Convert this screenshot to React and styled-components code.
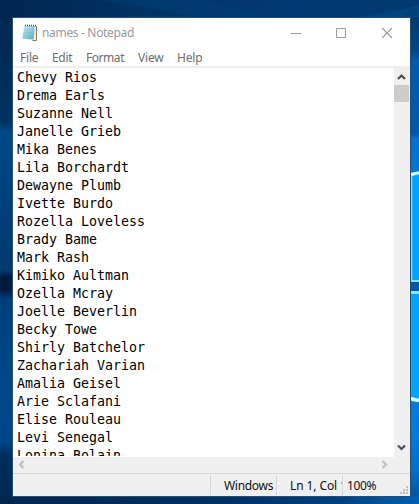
import React from "react";
import styled, { createGlobalStyle } from "styled-components";

const GlobalStyle = createGlobalStyle`
  * { box-sizing: border-box; }
  body { margin: 0; overflow: hidden; font-family: "Noto Sans", sans-serif; }
`;

const Desktop = styled.main`
  width: 419px;
  height: 504px;
  padding: 17px 8px 7px 12px;
  position: relative;
  overflow: hidden;
`;

const Wallpaper = styled.svg`
  position: absolute;
  inset: 0;
  display: block;
`;

const Window = styled.section`
  position: relative;
  width: 399px;
  height: 480px;
  border: 1px solid #234f78;
  background: #fff;
  display: flex;
  flex-direction: column;
`;

const TitleBar = styled.header`
  height: 29px;
  flex: none;
  display: flex;
  align-items: center;
  padding: 0 17px 0 8px;
`;

const Title = styled.h1`
  flex: 1;
  margin: 1px 0 0 3px;
  font-size: 12px;
  line-height: 16px;
  font-weight: 400;
  color: #999;
  letter-spacing: -0.33px;
`;

const WindowButtons = styled.div`
  display: grid;
  grid-template-columns: 45px 46px 12px;
`;

const Glyph = styled.svg`
  display: block;
  flex: none;
`;

const MenuBar = styled.nav`
  height: 21px;
  flex: none;
  display: flex;
  padding: 2px 0 0 7px;
  border-bottom: 2px solid #f0f0f0;
`;

const MenuItem = styled.span`
  width: ${(p) => p.$width}px;
  flex: none;
  font-size: 12px;
  line-height: 17px;
  letter-spacing: ${(p) => p.$tracking}px;
  color: #6d6d6d;
`;

const Editor = styled.div`
  height: 389px;
  flex: none;
  display: flex;
`;

const TextArea = styled.div`
  width: 381px;
  height: 388px;
  padding: 1px 0 0 4px;
  overflow: hidden;
  font-family: "DejaVu Sans Mono", monospace;
  font-size: 13.29px;
  color: #000;
`;

const Line = styled.div`
  height: 18px;
  line-height: 18px;
  white-space: pre;
`;

const VerticalScroll = styled.div`
  width: 16px;
  background: #f0f0f0;
  display: flex;
  flex-direction: column;
  align-items: flex-start;
  padding: 5px 0 6px 3px;
`;

const Thumb = styled.div`
  width: 15px;
  height: 17px;
  margin: 5px auto auto -3px;
  background: #cdcdcd;
`;

const HorizontalScroll = styled.div`
  height: 16px;
  flex: none;
  background: #f0f0f0;
  display: flex;
  align-items: flex-start;
  justify-content: space-between;
  padding: 3px 22px 0 5px;
`;

const StatusBar = styled.footer`
  flex: 1;
  background: #f0f0f0;
  border-top: 1px solid #d7d7d7;
  display: flex;
  padding: 1px 0 0 197px;
`;

const StatusCell = styled.div`
  width: ${(p) => p.$width}px;
  height: 20px;
  flex: none;
  overflow: hidden;
  border-left: 1px solid #d7d7d7;
  padding-left: ${(p) => p.$inset}px;
  font-size: 12px;
  line-height: 21px;
  letter-spacing: ${(p) => p.$tracking || 0}px;
  color: #111;
  white-space: nowrap;
`;

const Grip = styled(Glyph)`
  align-self: flex-end;
  margin: 0 2px 2px auto;
`;

const NAMES = [
  "Chevy Rios", "Drema Earls", "Suzanne Nell", "Janelle Grieb", "Mika Benes",
  "Lila Borchardt", "Dewayne Plumb", "Ivette Burdo", "Rozella Loveless",
  "Brady Bame", "Mark Rash", "Kimiko Aultman", "Ozella Mcray",
  "Joelle Beverlin", "Becky Towe", "Shirly Batchelor", "Zachariah Varian",
  "Amalia Geisel", "Arie Sclafani", "Elise Rouleau", "Levi Senegal",
  "Lonina Bolain",
];

const MENU = [
  ["File", 32, -0.2],
  ["Edit", 34, -0.3],
  ["Format", 52, -0.45],
  ["View", 39, -0.2],
  ["Help", 30, -0.2],
];

const CHEVRONS = {
  up: ["M1 6 4.5 2.5 8 6", 9, 7],
  down: ["M1 1.5 4.5 5 8 1.5", 9, 7],
  left: ["M5.5 1 2 4.5 5.5 8", 7, 9],
  right: ["M1.5 1 5 4.5 1.5 8", 7, 9],
};

function Chevron({ direction, color }) {
  const [d, width, height] = CHEVRONS[direction];
  return (
    <Glyph width={width} height={height}>
      <path d={d} fill="none" stroke={color} strokeWidth="2.2" />
    </Glyph>
  );
}

function DesktopArt() {
  return (
    <Wallpaper width="419" height="504">
      <defs>
        <linearGradient id="top" x2="1">
          <stop offset="0" stopColor="#00264f" />
          <stop offset=".35" stopColor="#003365" />
          <stop offset=".7" stopColor="#003a72" />
          <stop offset="1" stopColor="#003a70" />
        </linearGradient>
        <linearGradient id="left" x2="0" y2="1">
          <stop offset="0" stopColor="#00274f" />
          <stop offset=".215" stopColor="#003262" />
          <stop offset=".235" stopColor="#004a88" />
          <stop offset=".4" stopColor="#003f78" />
          <stop offset=".52" stopColor="#003b70" />
          <stop offset=".535" stopColor="#001a3c" />
          <stop offset=".56" stopColor="#001b3f" />
          <stop offset=".58" stopColor="#003f7a" />
          <stop offset=".75" stopColor="#004888" />
          <stop offset=".87" stopColor="#00478a" />
          <stop offset=".9" stopColor="#002e5e" />
          <stop offset="1" stopColor="#00264e" />
        </linearGradient>
        <linearGradient id="right" x2="0" y2="1">
          <stop offset="0" stopColor="#003a70" />
          <stop offset=".065" stopColor="#004586" />
          <stop offset=".09" stopColor="#005bad" />
          <stop offset=".24" stopColor="#0058a8" />
          <stop offset=".25" stopColor="#0071d0" />
          <stop offset=".34" stopColor="#0078dd" />
          <stop offset=".86" stopColor="#0078dc" />
          <stop offset=".93" stopColor="#006fcb" />
          <stop offset="1" stopColor="#004f97" />
        </linearGradient>
        <linearGradient id="bottom" x2="1">
          <stop offset="0" stopColor="#00264e" />
          <stop offset=".5" stopColor="#002f60" />
          <stop offset=".8" stopColor="#003f7c" />
          <stop offset="1" stopColor="#0060b2" />
        </linearGradient>
      </defs>
      <rect width="419" height="18" fill="url(#top)" />
      <path d="M205 0Q235 10 280 18H205Q150 8 100 0Z" fill="#004078" opacity=".45" />
      <path d="M350 18Q390 14 419 5V18Z" fill="#004b88" opacity=".6" />
      <rect y="17" width="13" height="487" fill="url(#left)" />
      <rect x="410" y="17" width="9" height="487" fill="url(#right)" />
      <rect y="496" width="419" height="8" fill="url(#bottom)" />
      <rect x="410" y="172" width="9" height="230" fill="#00a4ff" />
      <path d="M411.5 281V175L419 173" fill="none" stroke="#7fdcff" strokeWidth="1.5" />
      <path d="M411 174.5L419 172.8" stroke="#e8fbff" strokeWidth="3" />
      <rect x="410" y="280" width="9" height="14" fill="#8be5ff" />
      <rect x="410" y="282" width="9" height="9" fill="#0058a8" />
      <path d="M410 398.5L419 400.5" stroke="#e8fbff" strokeWidth="3.5" />
    </Wallpaper>
  );
}

function NotepadIcon() {
  return (
    <Glyph width="18" height="18" viewBox="0 0 18 18">
      <defs>
        <linearGradient id="pad" x2="1" y2="1">
          <stop offset="0" stopColor="#c8edf2" />
          <stop offset=".5" stopColor="#91cedb" />
          <stop offset="1" stopColor="#55a5b9" />
        </linearGradient>
      </defs>
      <path d="M4 2H15V16.5H12.5L2 15Z" fill="#f4ecd5" />
      <path d="M15.5 2V16.5H11.5" fill="none" stroke="#8b7952" />
      <path d="M3.5 2H14L12.5 15.5 1 14.5Z" fill="url(#pad)" />
      <path d="M3 6H13M2.5 8.5H13M2.5 11H12.5" stroke="#79b9c8" strokeWidth=".5" />
      <path d="M4 1.5H15" stroke="#39454c" strokeWidth="1.4" strokeDasharray="1 1" />
    </Glyph>
  );
}

export default function App() {
  return (
    <Desktop>
      <GlobalStyle />
      <DesktopArt />
      <Window>
        <TitleBar>
          <NotepadIcon />
          <Title>names - Notepad</Title>
          <WindowButtons>
            <Glyph width="12" height="12"><path d="M1 6.5H11" stroke="#999" /></Glyph>
            <Glyph width="12" height="12"><path d="M1.5 1.5H10.5V10.5H1.5Z" fill="none" stroke="#999" /></Glyph>
            <Glyph width="12" height="12"><path d="M1 1 11 11M11 1 1 11" stroke="#999" strokeWidth="1.1" /></Glyph>
          </WindowButtons>
        </TitleBar>
        <MenuBar>
          {MENU.map(([label, width, tracking]) => (
            <MenuItem key={label} $width={width} $tracking={tracking}>{label}</MenuItem>
          ))}
        </MenuBar>
        <Editor>
          <TextArea>
            {NAMES.map((name) => <Line key={name}>{name}</Line>)}
          </TextArea>
          <VerticalScroll>
            <Chevron direction="up" color="#505050" />
            <Thumb />
            <Chevron direction="down" color="#505050" />
          </VerticalScroll>
        </Editor>
        <HorizontalScroll>
          <Chevron direction="left" color="#bfbfbf" />
          <Chevron direction="right" color="#bfbfbf" />
        </HorizontalScroll>
        <StatusBar>
          <StatusCell $width={66} $inset={13} $tracking={-0.3}>Windows</StatusCell>
          <StatusCell $width={66} $inset={13} $tracking={-0.1}>Ln 1, Col 1</StatusCell>
          <StatusCell $width={50} $inset={4} $tracking={-0.4}>100%</StatusCell>
          <Grip width="8" height="8" fill="#bfbfbf">
            <path d="M6 0h2v2H6zM3 3h2v2H3zM6 3h2v2H6zM0 6h2v2H0zM3 6h2v2H3zM6 6h2v2H6z" />
          </Grip>
        </StatusBar>
      </Window>
    </Desktop>
  );
}
